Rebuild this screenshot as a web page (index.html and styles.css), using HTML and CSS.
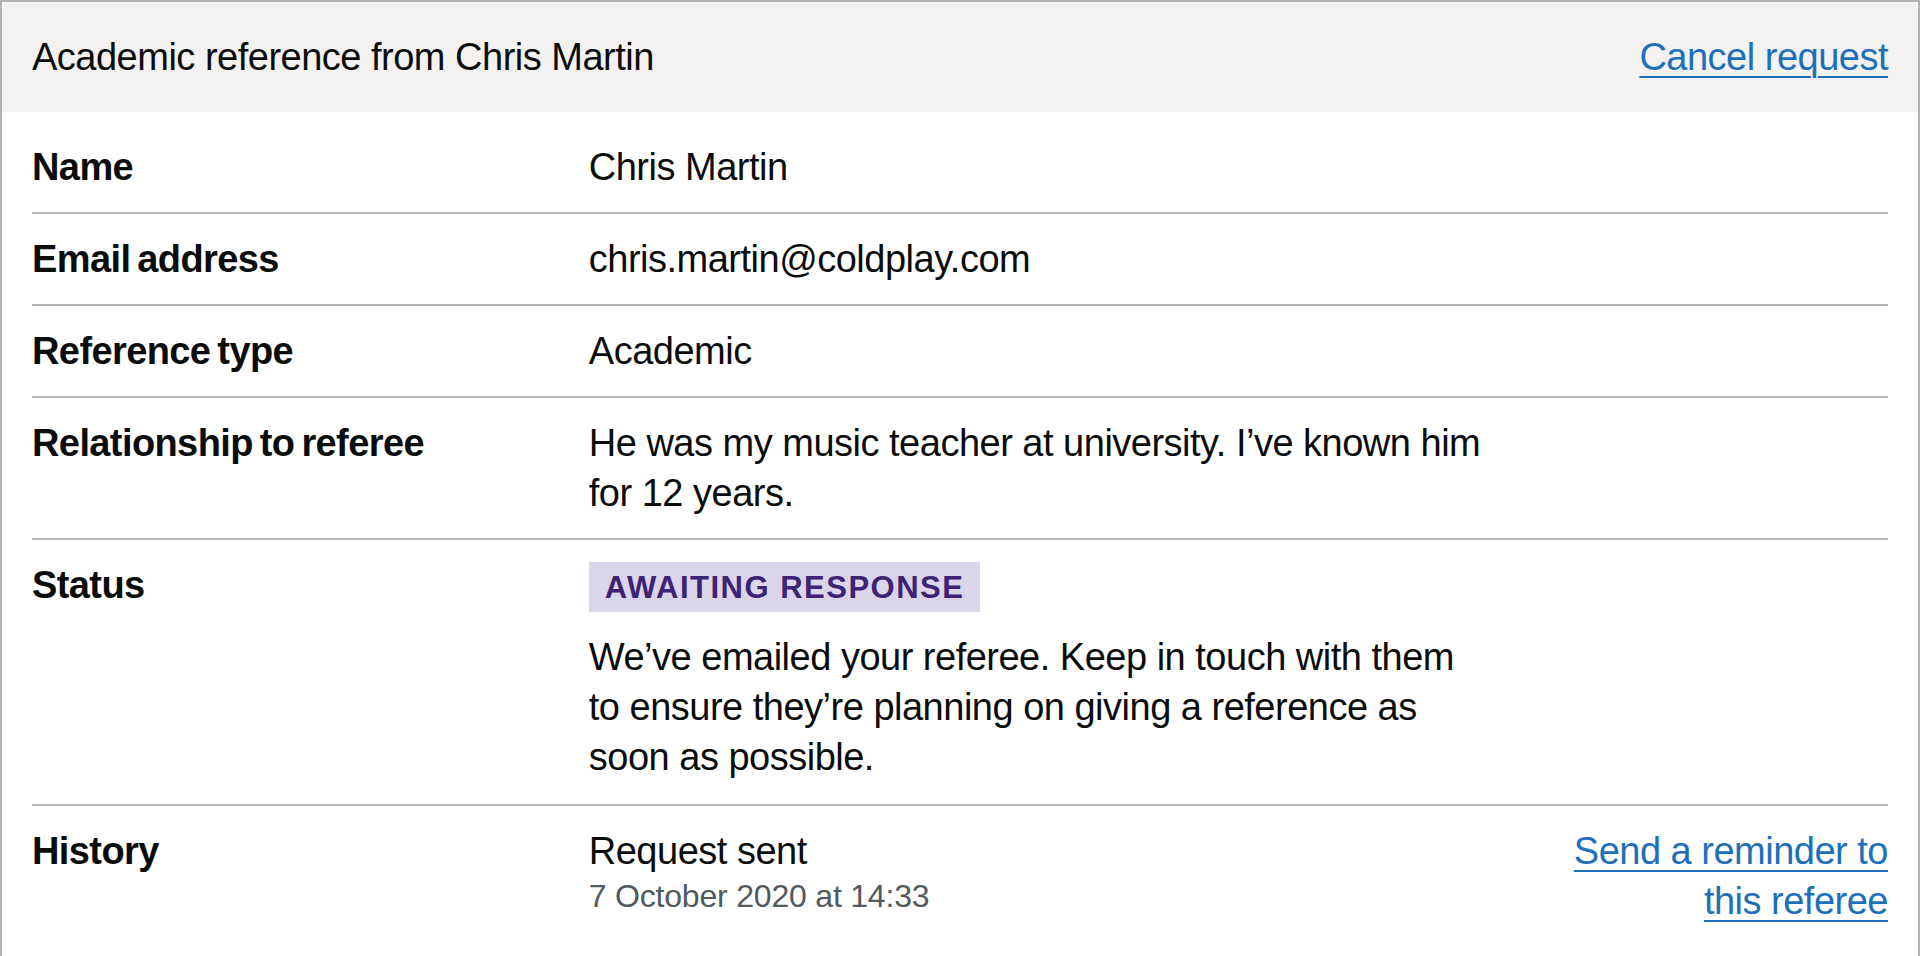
FILE: index.html
```html
<!DOCTYPE html>
<html lang="en">
<head>
<meta charset="utf-8">
<title>Academic reference from Chris Martin</title>
<link rel="stylesheet" href="styles.css">
</head>
<body>
<div class="card">
  <div class="card-header">
    <h2 class="card-title">Academic reference from Chris Martin</h2>
    <a class="link" href="#">Cancel request</a>
  </div>
  <dl class="summary">
    <div class="row">
      <dt class="key">Name</dt>
      <dd class="value">Chris Martin</dd>
    </div>
    <div class="row">
      <dt class="key">Email address</dt>
      <dd class="value">chris.martin@coldplay.com</dd>
    </div>
    <div class="row">
      <dt class="key">Reference type</dt>
      <dd class="value">Academic</dd>
    </div>
    <div class="row">
      <dt class="key">Relationship to referee</dt>
      <dd class="value">He was my music teacher at university. I’ve known him for 12 years.</dd>
    </div>
    <div class="row row-status">
      <dt class="key">Status</dt>
      <dd class="value">
        <div><strong class="tag">Awaiting response</strong></div>
        <p class="body">We’ve emailed your referee. Keep in touch with them to ensure they’re planning on giving a reference as soon as possible.</p>
      </dd>
    </div>
    <div class="row row-last">
      <dt class="key">History</dt>
      <dd class="value">
        <div>Request sent</div>
        <div class="secondary">7 October 2020 at 14:33</div>
      </dd>
      <dd class="actions"><a class="link" href="#">Send a reminder to this referee</a></dd>
    </div>
  </dl>
</div>
</body>
</html>
```

FILE: styles.css
```css
* {
  box-sizing: border-box;
}

html, body {
  margin: 0;
  padding: 0;
  background: #ffffff;
}

body {
  font-family: "Liberation Sans", Arial, sans-serif;
  color: #0b0c0c;
  font-size: 38px;
  line-height: 50px;
  letter-spacing: -0.5px;
}

.card {
  border: 2px solid #b1b4b6;
  min-height: 956px;
}

.card-header {
  display: flex;
  justify-content: space-between;
  align-items: baseline;
  background: #f3f2f1;
  padding: 30px 30px;
}

.card-title {
  margin: 0;
  font-size: 38px;
  line-height: 50px;
  font-weight: 400;
}

.link {
  color: #1d70b8;
  text-decoration: underline;
  text-decoration-thickness: 2px;
  text-underline-offset: 0.16em;
}

.summary {
  margin: 0;
  padding: 10px 30px;
}

.row {
  display: grid;
  grid-template-columns: 30% 50% 20%;
  border-bottom: 2px solid #b1b4b6;
}

.row-last {
  border-bottom: 0;
}

.key,
.value,
.actions {
  margin: 0;
  padding-top: 20px;
  padding-bottom: 20px;
}

.key {
  font-weight: 700;
  letter-spacing: -0.6px;
  word-spacing: -3px;
  padding-right: 40px;
}

.value {
  padding-right: 26px;
  grid-column: 2;
}

.actions {
  grid-column: 3;
  text-align: right;
}

.row-status .value {
  padding-bottom: 22px;
}

.tag {
  display: inline-block;
  background: #dbd5e9;
  color: #3d2375;
  font-weight: 700;
  font-size: 31px;
  line-height: 32px;
  letter-spacing: 1.5px;
  text-transform: uppercase;
  padding: 10px 16px 8px;
}

.body {
  margin: 20px 0 0;
}

.secondary {
  color: #505a5f;
  font-size: 32px;
  line-height: 40px;
  letter-spacing: -0.2px;
}
```
